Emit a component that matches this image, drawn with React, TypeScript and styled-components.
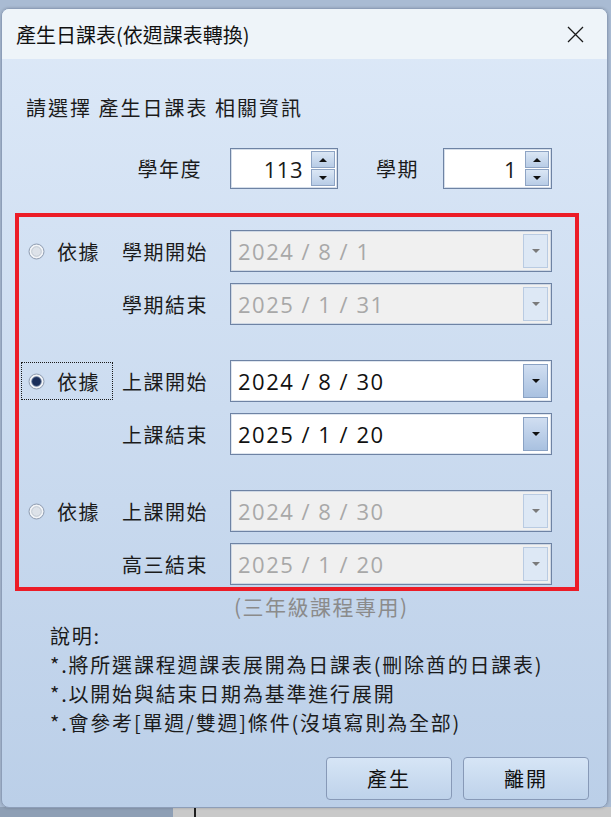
import styled, { createGlobalStyle } from 'styled-components'

const CJK = '"Noto Sans CJK TC", "Noto Sans", sans-serif'
const DIGITS = '"Open Sans", "Noto Sans CJK TC", sans-serif'

const GlobalStyle = createGlobalStyle`
  html, body {
    margin: 0;
    padding: 0;
  }
  body {
    width: 611px;
    height: 817px;
    overflow: hidden;
    font-family: ${CJK};
  }
`

const Desktop = styled.div`
  width: 611px;
  height: 817px;
  box-sizing: border-box;
  padding: 8px 3px 0 1px;
  background:
    linear-gradient(
        to right,
        #8e9fb5 0,
        #8e9fb5 173px,
        #c9c9c9 173px,
        #c9c9c9 194px,
        #1e1e1e 194px,
        #1e1e1e 196px,
        #c9c9c9 196px
      )
      left bottom / 100% 10px no-repeat,
    #a9bbd3;
`

const Window = styled.div`
  width: 607px;
  height: 800px;
  box-sizing: border-box;
  border: 1px solid #8d9eb8;
  border-radius: 8px;
  overflow: hidden;
  display: flex;
  flex-direction: column;
  background: linear-gradient(#dde9f8, #bbcfe8);
  box-shadow: 0 0 3px rgba(0, 0, 0, 0.2);
`

const TitleBar = styled.div`
  height: 50px;
  flex-shrink: 0;
  display: flex;
  align-items: center;
  padding-left: 14px;
  background: #eef4f9;
`

const Title = styled.span`
  font-size: 20px;
  color: #111;
`

const CloseButton = styled.div`
  width: 46px;
  height: 50px;
  margin-left: auto;
  margin-right: 9px;
  display: flex;
  align-items: center;
  justify-content: center;
`

const Body = styled.div`
  flex: 1;
  display: flex;
  flex-direction: column;
  color: #1b1b1b;
  font-size: 20px;
  letter-spacing: 1.5px;
`

const Heading = styled.div`
  margin: 37px 0 0 24px;
  line-height: 24px;
  letter-spacing: 2px;
`

const SpinRow = styled.div`
  margin: 28px 0 0 98px;
  height: 41px;
  display: flex;
  align-items: center;
`

const SpinLabel = styled.span<{ $width: number; $right?: boolean; $indent?: number }>`
  box-sizing: border-box;
  width: ${(p) => p.$width}px;
  padding-left: ${(p) => p.$indent ?? 0}px;
  text-align: ${(p) => (p.$right ? 'right' : 'left')};
`

const SpinBox = styled.div<{ $width: number; $gap: number }>`
  box-sizing: border-box;
  width: ${(p) => p.$width}px;
  height: 41px;
  margin-left: ${(p) => p.$gap}px;
  display: flex;
  border: 1px solid #6e83a4;
  box-shadow: inset 0 0 0 1px #d5deea;
  background: #fff;
`

const SpinValue = styled.span`
  flex: 1;
  align-self: center;
  text-align: right;
  padding-right: 8px;
  font-family: ${DIGITS};
  font-size: 22px;
  letter-spacing: 0.5px;
  color: #1a1a1a;
`

const SpinButtons = styled.div`
  width: 24px;
  padding: 2px 2px 2px 0;
  display: flex;
  flex-direction: column;
  gap: 1px;
`

const SpinButton = styled.div`
  flex: 1;
  display: flex;
  align-items: center;
  justify-content: center;
  border: 1px solid #8ea4c4;
  background: linear-gradient(#dbe7f5, #b8cce6);
`

const Arrow = styled.span<{ $up?: boolean; $color: string }>`
  width: 0;
  height: 0;
  border-left: 4px solid transparent;
  border-right: 4px solid transparent;
  ${(p) =>
    p.$up
      ? `border-bottom: 4px solid ${p.$color};`
      : `border-top: 4px solid ${p.$color};`}
`

const Frame = styled.div`
  width: 564px;
  margin: 24px 0 0 13px;
  box-sizing: border-box;
  border: 4px solid #ec1c27;
  padding: 13px 0 2px 2px;
  display: flex;
  flex-direction: column;
  gap: 35px;
`

const Group = styled.div`
  display: flex;
  align-items: flex-start;
`

const RadioOption = styled.div<{ $focused?: boolean }>`
  box-sizing: border-box;
  width: 92px;
  height: 38px;
  margin-top: 2px;
  padding-left: 6px;
  display: flex;
  align-items: center;
  gap: 12px;
  border: 1px dotted ${(p) => (p.$focused ? '#1a1a1a' : 'transparent')};
`

const Fields = styled.div`
  display: flex;
  flex-direction: column;
  gap: 11px;
`

const FieldRow = styled.div`
  height: 42px;
  display: flex;
  align-items: center;
`

const RowLabel = styled.span`
  width: 95px;
  margin-right: 22px;
  text-align: right;
`

const ComboBox = styled.div<{ $disabled?: boolean }>`
  box-sizing: border-box;
  width: 322px;
  height: 42px;
  display: flex;
  align-items: center;
  padding: 0 3px 0 7px;
  border: 1px solid #6e83a4;
  box-shadow: inset 0 0 0 1px ${(p) => (p.$disabled ? '#cfd8e4' : '#dfe6ef')};
  background: ${(p) => (p.$disabled ? '#f0f0f0' : '#fff')};
`

const ComboValue = styled.span<{ $disabled?: boolean }>`
  flex: 1;
  font-family: ${DIGITS};
  font-size: 22px;
  letter-spacing: 1.5px;
  color: ${(p) => (p.$disabled ? '#a8a8a8' : '#111')};
`

const DropButton = styled.div<{ $disabled?: boolean }>`
  box-sizing: border-box;
  width: 25px;
  height: 34px;
  display: flex;
  align-items: center;
  justify-content: center;
  border: 1px solid ${(p) => (p.$disabled ? '#b9cbe2' : '#8aa2c4')};
  background: ${(p) =>
    p.$disabled ? '#dde8f5' : 'linear-gradient(#d0def1, #a9c1e0)'};
`

const Note = styled.div`
  margin-top: 1px;
  padding-left: 232px;
  line-height: 29px;
  color: #8b8b8b;
  letter-spacing: 1.5px;
  font-size: 21px;
`

const Description = styled.div`
  padding-left: 48px;
  line-height: 29px;
  letter-spacing: 1.8px;
`

const ButtonRow = styled.div`
  margin-top: 20px;
  padding-right: 18px;
  display: flex;
  justify-content: flex-end;
  gap: 11px;
`

const DialogButton = styled.button`
  box-sizing: border-box;
  width: 126px;
  height: 43px;
  padding: 0;
  border: 1px solid #8799b7;
  border-radius: 4px;
  background: linear-gradient(#d6e5f6, #bed2ea);
  font-family: ${CJK};
  font-size: 20px;
  letter-spacing: 2px;
  color: #111;
`

function CloseIcon() {
  return (
    <svg width="17" height="17" viewBox="0 0 17 17">
      <path d="M1 1 L16 16 M16 1 L1 16" stroke="#1a1a1a" strokeWidth="1.3" fill="none" />
    </svg>
  )
}

function RadioMark({ checked }: { checked?: boolean }) {
  return (
    <svg width="17" height="17" viewBox="0 0 17 17">
      <circle cx="8.5" cy="8.5" r="7.5" fill="#e9edf2" stroke="#8f9cb0" strokeWidth="1" />
      <circle cx="8.5" cy="8.5" r="6" fill="none" stroke="#f7f8fa" strokeWidth="1" />
      {checked ? (
        <circle cx="8.5" cy="8.5" r="4.8" fill="#1b2f5b" stroke="#6b7f9f" strokeWidth="0.8" />
      ) : (
        <circle cx="8.5" cy="8.5" r="4.8" fill="#dde2e9" stroke="#b9c1cc" strokeWidth="0.8" />
      )}
    </svg>
  )
}

function Spin({ value, width, gap }: { value: string; width: number; gap: number }) {
  return (
    <SpinBox $width={width} $gap={gap}>
      <SpinValue>{value}</SpinValue>
      <SpinButtons>
        <SpinButton>
          <Arrow $up $color="#111" />
        </SpinButton>
        <SpinButton>
          <Arrow $color="#111" />
        </SpinButton>
      </SpinButtons>
    </SpinBox>
  )
}

type Field = { label: string; value: string }

const GROUPS: { fields: Field[]; checked?: boolean }[] = [
  {
    fields: [
      { label: '學期開始', value: '2024 / 8 / 1' },
      { label: '學期結束', value: '2025 / 1 / 31' },
    ],
  },
  {
    checked: true,
    fields: [
      { label: '上課開始', value: '2024 / 8 / 30' },
      { label: '上課結束', value: '2025 / 1 / 20' },
    ],
  },
  {
    fields: [
      { label: '上課開始', value: '2024 / 8 / 30' },
      { label: '高三結束', value: '2025 / 1 / 20' },
    ],
  },
]

const NOTES = [
  '說明:',
  '*.將所選課程週課表展開為日課表(刪除酋的日課表)',
  '*.以開始與結束日期為基準進行展開',
  '*.會參考[單週/雙週]條件(沒填寫則為全部)',
]

export default function App() {
  return (
    <Desktop>
      <GlobalStyle />
      <Window>
        <TitleBar>
          <Title>產生日課表(依週課表轉換)</Title>
          <CloseButton>
            <CloseIcon />
          </CloseButton>
        </TitleBar>
        <Body>
          <Heading>請選擇 產生日課表 相關資訊</Heading>
          <SpinRow>
            <SpinLabel $width={102} $right>
              學年度
            </SpinLabel>
            <Spin value="113" width={108} gap={28} />
            <SpinLabel $width={83} $indent={38}>
              學期
            </SpinLabel>
            <Spin value="1" width={109} gap={22} />
          </SpinRow>
          <Frame>
            {GROUPS.map((group, i) => (
              <Group key={i}>
                <RadioOption $focused={group.checked}>
                  <RadioMark checked={group.checked} />
                  <span>依據</span>
                </RadioOption>
                <Fields>
                  {group.fields.map((f) => (
                    <FieldRow key={f.label}>
                      <RowLabel>{f.label}</RowLabel>
                      <ComboBox $disabled={!group.checked}>
                        <ComboValue $disabled={!group.checked}>{f.value}</ComboValue>
                        <DropButton $disabled={!group.checked}>
                          <Arrow $color={group.checked ? '#111' : '#7a7a7a'} />
                        </DropButton>
                      </ComboBox>
                    </FieldRow>
                  ))}
                </Fields>
              </Group>
            ))}
          </Frame>
          <Note>(三年級課程專用)</Note>
          <Description>
            {NOTES.map((line) => (
              <div key={line}>{line}</div>
            ))}
          </Description>
          <ButtonRow>
            <DialogButton>產生</DialogButton>
            <DialogButton>離開</DialogButton>
          </ButtonRow>
        </Body>
      </Window>
    </Desktop>
  )
}
